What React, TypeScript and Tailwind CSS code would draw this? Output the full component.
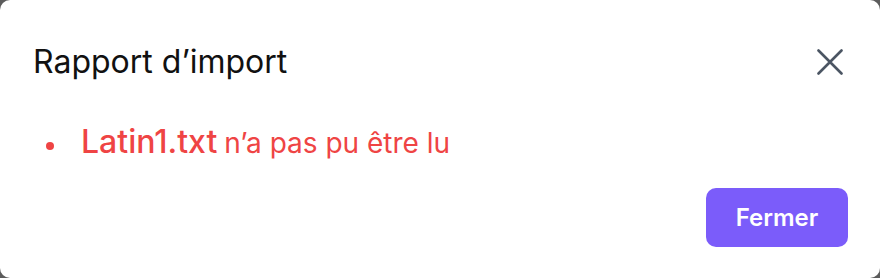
import React from "react";

// Boîte de dialogue : rapport d'import
const App: React.FC = () => {
  return (
    <div className="h-[278px] w-[880px] bg-[#5c5c5c]" style={{ fontFamily: "Inter, 'Noto Sans', sans-serif" }}>
      <div className="flex h-full flex-col rounded-[10px] bg-white">
        {/* En-tête */}
        <div className="flex items-center justify-between pl-[33px] pr-[37px] pt-[43px]">
          <h2 className="text-[32px] leading-[38px] text-[#111111]">Rapport d’import</h2>
          <button className="text-[#4b5563]">
            <svg width="26" height="26" viewBox="0 0 26 26" fill="none" stroke="currentColor" strokeWidth="2.6" strokeLinecap="round">
              <path d="M1.5 1.5 24.5 24.5M24.5 1.5 1.5 24.5" />
            </svg>
          </button>
        </div>

        {/* Erreurs */}
        <ul className="mt-[41px] pl-[46px] text-[#ef4444]">
          <li className="flex items-baseline text-[28px] leading-[40px]">
            <span className="relative -top-[3px] mr-[27px] inline-block h-[8px] w-[8px] rounded-full bg-[#ef4444]" />
            <span className="text-[32px] font-medium">Latin1.txt</span>
            <span className="ml-[7px]">n’a pas pu être lu</span>
          </li>
        </ul>

        {/* Pied */}
        <div className="mt-auto flex justify-end pb-[31px] pr-[32px]">
          <button className="h-[59px] w-[142px] rounded-[10px] bg-[#7b5cfa] text-[24px] font-semibold text-white">
            Fermer
          </button>
        </div>
      </div>
    </div>
  );
};

export default App;
